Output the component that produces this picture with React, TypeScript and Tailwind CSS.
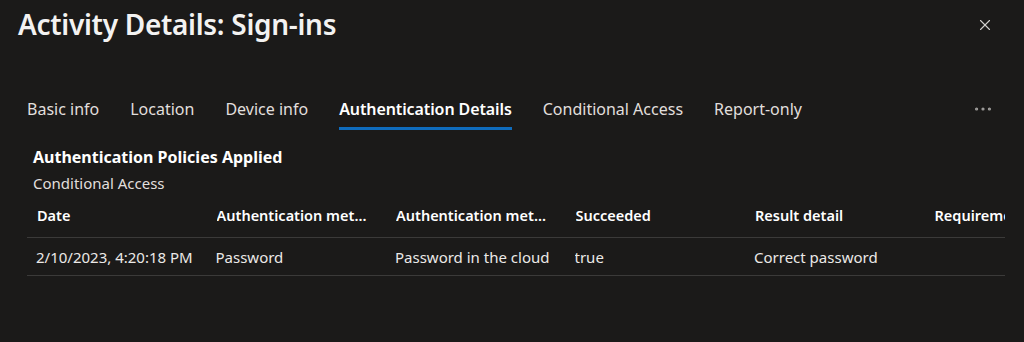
import { X, MoreHorizontal } from "lucide-react";

const tabs = [
  "Basic info",
  "Location",
  "Device info",
  "Authentication Details",
  "Conditional Access",
  "Report-only",
];

const columns = [
  "Date",
  "Authentication method",
  "Authentication method detail",
  "Succeeded",
  "Result detail",
  "Requirement",
];

const rows = [
  ["2/10/2023, 4:20:18 PM", "Password", "Password in the cloud", "true", "Correct password", ""],
];

export default function App() {
  const active = "Authentication Details";

  return (
    <div
      className="w-[1024px] h-[342px] bg-[#1b1a19] text-[#f3f2f1] overflow-hidden"
      style={{ fontFamily: '"Noto Sans", "Open Sans", sans-serif' }}
    >
      {/* header */}
      <div className="flex items-start justify-between pl-[18px] pr-[30px] pt-[4px]">
        <h1 className="text-[28px] leading-[40px] font-semibold tracking-[-0.3px]">
          Activity Details: Sign-ins
        </h1>
        <button className="mt-[12px] text-[#d2d0ce]">
          <X size={18} strokeWidth={1.5} />
        </button>
      </div>

      {/* tabs */}
      <div className="flex items-center mt-[47px] pl-[27px] pr-[30px]">
        <div className="flex gap-[31px] flex-1">
          {tabs.map((tab) => (
            <div key={tab} className="relative pt-[6px] pb-[9px]">
              <span
                className={`text-[16px] leading-[22px] ${
                  tab === active ? "font-semibold text-white tracking-[-0.1px]" : "text-[#e1dfdd]"
                }`}
              >
                {tab}
              </span>
              {tab === active && (
                <div className="absolute left-0 right-0 bottom-0 h-[3px] bg-[#0f6cbd]" />
              )}
            </div>
          ))}
        </div>
        <MoreHorizontal size={22} className="text-[#a19f9d] mb-[4px]" strokeWidth={1.5} />
      </div>

      {/* content */}
      <div className="pl-[27px] pt-[16px]">
        <div className="pl-[6px] text-[16px] leading-[22px] font-bold text-white">
          Authentication Policies Applied
        </div>
        <div className="pl-[6px] mt-[5px] text-[15px] leading-[20px] text-[#e1dfdd]">
          Conditional Access
        </div>

        <div className="w-[978px] overflow-hidden">
          <div className="flex border-b border-[#3b3a39] pt-[12px] pb-[12px] w-max text-[14.5px] leading-[20px]">
            {columns.map((col) => (
              <div key={col} className="w-[179.5px] shrink-0 pl-[10px] pr-[16px]">
                <div className="truncate font-semibold text-white">{col}</div>
              </div>
            ))}
          </div>
          {rows.map((row, i) => (
            <div
              key={i}
              className="flex border-b border-[#3b3a39] pt-[9px] pb-[8px] w-max text-[15px] leading-[20px]"
            >
              {row.map((cell, j) => (
                <div key={j} className="w-[179.5px] shrink-0 pl-[9px] pr-[12px]">
                  <div className="truncate text-[#ebe9e7]">{cell}</div>
                </div>
              ))}
            </div>
          ))}
        </div>
      </div>
    </div>
  );
}
